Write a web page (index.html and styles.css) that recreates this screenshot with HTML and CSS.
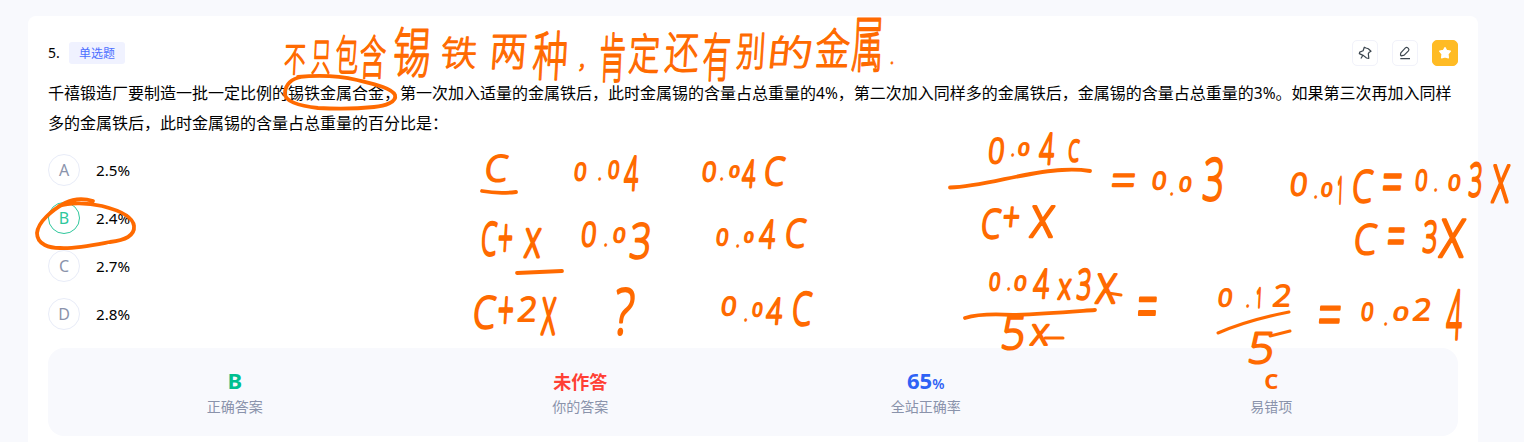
FILE: index.html
```html
<!DOCTYPE html>
<html lang="zh-CN">
<head>
<meta charset="utf-8">
<title>单选题</title>
<link rel="stylesheet" href="styles.css">
</head>
<body>
<main class="card">
  <header class="head">
    <span class="num">5.</span>
    <span class="tag">单选题</span>
    <div class="tools">
      <button class="tool" aria-label="pin"><svg width="14" height="14" viewBox="0 0 14 14"><path d="M6.300 1.200 8 2 10.300 2.800 13 5.300 11.300 6.200 10.300 7.600 10.800 12.300 8.500 12 5.600 9.600 1.300 7.600 1.700 6.100 5.100 4.800ZM4.600 9.700 2.900 12.500"/></svg></button>
      <button class="tool" aria-label="edit"><svg width="14" height="14" viewBox="0 0 14 14"><path d="M2.800 6.800 7.400 1.900Q8.600.9 9.800 1.900L10.500 2.600Q11.400 3.600 10.400 4.800L6.200 9.200 3.200 9.900 2.500 9.100ZM2.300 12.700H12"/></svg></button>
      <button class="tool tool-on" aria-label="star"><svg width="14" height="14" viewBox="0 0 14 14"><path d="M7 1.600 8.600 4.400 12.400 5.200 10 8 10.400 11.900 7 10.900 3.600 11.900 4 8 1.600 5.200 5.400 4.400Z"/></svg></button>
    </div>
  </header>
  <p class="stem"><span class="line">千禧锻造厂要制造一批一定比例的锡铁金属合金，第一次加入适量的金属铁后，此时金属锡的含量占总重量的<span class="n">4%</span>，第二次加入同样多的金属铁后，金属锡的含量占总重量的<span class="n">3%</span>。如果第三次再加入同样</span><span class="line">多的金属铁后，此时金属锡的含量占总重量的百分比是：</span></p>
  <ul class="options">
    <li class="option"><span class="key">A</span><span>2.5%</span></li>
    <li class="option"><span class="key key-right">B</span><span>2.4%</span></li>
    <li class="option"><span class="key">C</span><span>2.7%</span></li>
    <li class="option"><span class="key">D</span><span>2.8%</span></li>
  </ul>
  <section class="stats">
    <div class="stat"><b class="value green">B</b><span class="label">正确答案</span></div>
    <div class="stat"><b class="value red">未作答</b><span class="label">你的答案</span></div>
    <div class="stat"><b class="value blue">65<small>%</small></b><span class="label">全站正确率</span></div>
    <div class="stat"><b class="value orange">C</b><span class="label">易错项</span></div>
  </section>
</main>

<svg class="ink" width="1524" height="442" viewBox="0 0 1524 442">
  <g class="note">
    <text data-box="284 45 306 76">不</text><text data-box="311 40 331 75">只</text><text data-box="335 34 359 74">包</text><text data-box="359 34 387 80">含</text><text data-box="392 26 431 79">锡</text><text data-box="440 36 478 70">铁</text><text data-box="490 34 527 71">两</text><text data-box="532 30 568 82">种</text><text data-box="579 64 584 72">，</text><text data-box="599 32 626 84">肯</text><text data-box="628 33 661 75">定</text><text data-box="664 32 700 74">还</text><text data-box="702 32 731 83">有</text><text data-box="736 32 765 70">别</text><text data-box="769 35 812 69">的</text><text data-box="815 27 851 67">金</text><text data-box="851 17 882 73">属</text><text data-box="890 61 894 65">.</text>
  </g>
  <g class="math">
    <text data-box="485 155 509 182">C</text><text data-box="574 163 587 181">0</text><text data-box="598 177 602 181">.</text><text data-box="608 161 620 179">0</text><text data-box="623 156 640 191">4</text>
    <text data-box="702 162 717 182">0</text><text data-box="720 177 724 181">.</text><text data-box="729 166 740 178">0</text><text data-box="741 160 757 188">4</text><text data-box="764 157 786 186">C</text>
  </g>
  <g class="math">
    <text data-box="481 222 498 256">C</text><text data-box="498 224 513 252">+</text><text data-box="523 228 542 258">x</text><text data-box="581 222 597 247">0</text><text data-box="604 243 608 247">.</text><text data-box="613 228 626 243">0</text><text data-box="629 223 652 259">3</text>
    <text data-box="716 229 729 246">0</text><text data-box="736 244 740 248">.</text><text data-box="744 232 754 243">0</text><text data-box="758 220 777 249">4</text><text data-box="785 219 807 248">C</text>
  </g>
  <g class="math">
    <text data-box="473 296 497 329">C</text><text data-box="498 296 514 324">+</text><text data-box="518 297 538 322">2</text><text data-box="540 297 557 335">x</text><text data-box="613 288 636 335">?</text>
    <text data-box="721 297 737 316">0</text><text data-box="744 318 748 322">.</text><text data-box="752 303 763 317">0</text><text data-box="765 298 784 325">4</text><text data-box="792 292 813 326">C</text>
  </g>
  <g class="math">
    <text data-box="988 138 1005 164">0</text><text data-box="1011 153 1015 157">.</text><text data-box="1018 143 1030 156">0</text><text data-box="1038 133 1056 165">4</text><text data-box="1068 140 1080 162">C</text>
    <text data-box="981 209 1002 239">C</text><text data-box="1003 207 1020 228">+</text><text data-box="1028 205 1056 238">x</text>
    <text data-box="1112 174 1135 187">=</text><text data-box="1152 172 1167 190">0</text><text data-box="1170 192 1174 196">.</text><text data-box="1179 177 1192 192">0</text><text data-box="1202 158 1225 201">3</text>
  </g>
  <g class="math">
    <text data-box="989 273 1001 291">0</text><text data-box="1007 287 1011 291">.</text><text data-box="1014 276 1027 291">0</text><text data-box="1032 269 1051 299">4</text><text data-box="1057 279 1072 300">x</text><text data-box="1076 269 1092 300">3</text><text data-box="1094 273 1118 304">x</text>
    <text data-box="1001 316 1026 350">5</text><text data-box="1029 324 1050 346">x</text><text data-box="1138 297 1157 315">=</text>
    <text data-box="1218 289 1233 307">0</text><text data-box="1246 304 1250 308">.</text><text data-box="1256 288 1261 308">1</text><text data-box="1273 285 1292 307">2</text><text data-box="1248 332 1275 364">5</text>
    <text data-box="1319 306 1341 323">=</text><text data-box="1361 303 1374 321">0</text><text data-box="1384 322 1388 326">.</text><text data-box="1393 307 1409 321">0</text><text data-box="1413 299 1432 321">2</text><text data-box="1445 290 1464 340">4</text>
  </g>
  <g class="math">
    <text data-box="1290 173 1308 196">0</text><text data-box="1314 195 1318 199">.</text><text data-box="1321 183 1333 197">0</text><text data-box="1337 177 1342 204">1</text><text data-box="1352 170 1374 203">C</text><text data-box="1383 174 1402 190">=</text><text data-box="1415 170 1428 191">0</text><text data-box="1434 188 1438 192">.</text><text data-box="1448 175 1461 191">0</text><text data-box="1468 163 1483 197">3</text><text data-box="1490 164 1511 203">x</text>
    <text data-box="1354 224 1378 255">C</text><text data-box="1388 228 1405 244">=</text><text data-box="1422 221 1438 253">3</text><text data-box="1437 218 1467 258">x</text>
  </g>
  <g class="marks">
    <path d="M298 77C318 75 340 76 357 80C373 84 392 88 395 95C397 102 385 106 374 107C355 109 336 109 318 108C299 106 283 101 285 92C286 84 291 79 301 77"/>
    <path d="M93 201C83 198 73 199 65 203C52 210 38 222 37 233C37 245 50 248 60 248C75 249 94 245 110 242C125 240 135 236 134 226C133 216 118 210 102 206C88 203 70 202 59 206"/>
    <path d="M482 191Q498 194 516 192"/><path d="M517 273Q540 272 562 271"/>
    <path d="M950 187.500C983 187 1023 172 1062 170Q1077 169 1090 171"/>
    <path d="M965 318Q981 313 1013 315C1042 314 1067 312 1095 310"/>
    <path class="thin" d="M1218 333Q1248 320 1289 312"/><path class="thin" d="M1045 338H1063"/><path class="thin" d="M1108 293 1121 295"/><path class="thin" d="M1270 336 1290 331"/>
  </g>
</svg>
<script src="ink.js"></script>
</body>
</html>
```
FILE: ink.js
```js
// Slant each handwritten character and stretch it to fill its box: "left top right bottom".
const PEN = 2.2;
const ctx = document.createElement('canvas').getContext('2d');
document.querySelectorAll('.ink text').forEach((el) => {
  const [l, t, r, b] = el.dataset.box.split(' ').map(Number);
  const style = getComputedStyle(el);
  const angle = el.closest('.note') ? 5 : 7;
  const k = Math.tan(angle * Math.PI / 180);
  ctx.font = `${style.fontWeight} ${style.fontSize} ${style.fontFamily}`;
  const m = ctx.measureText(el.textContent);
  const h = m.actualBoundingBoxAscent + m.actualBoundingBoxDescent;
  const w = m.actualBoundingBoxRight + m.actualBoundingBoxLeft;
  const pen = el.closest('.note') ? 1.2 : PEN;
  const sx = (r - l - pen / 2) / (w + k * h);
  const sy = (b - t - pen / 2) / h;
  const x = l + pen / 4 + (m.actualBoundingBoxLeft + k * m.actualBoundingBoxDescent) * sx;
  const y = t + pen / 4 + m.actualBoundingBoxAscent * sy;
  el.style.strokeWidth = `${pen / Math.sqrt(sx * sy) / (el.textContent === '.' ? 3 : 1)}px`;
  el.setAttribute('transform', `translate(${x} ${y}) scale(${sx} ${sy}) skewX(${-angle})`);
});
```
FILE: styles.css
```css
* { box-sizing: border-box; }
body {
  margin: 0;
  height: 442px;
  padding: 16px 46px 0 28px;
  overflow: hidden;
  position: relative;
  background: #f8f9fd;
  color: #000;
  font: 16px/30px "Noto Sans", "Noto Sans CJK SC", sans-serif;
}
.card {
  height: 426px;
  padding: 24px 20px 0;
  border-radius: 8px 8px 0 0;
  background: #fff;
}
.head { display: flex; align-items: center; height: 26px; }
.num { width: 21px; font-size: 14px; }
.tag {
  width: 56px;
  height: 22px;
  border-radius: 3px;
  background: #f0f2ff;
  color: #4c6fff;
  font-size: 12px;
  line-height: 23px;
  text-align: center;
}
.tools { display: flex; gap: 14px; margin-left: auto; }
.tool {
  display: flex;
  align-items: center;
  justify-content: center;
  width: 26px;
  height: 26px;
  padding: 0;
  border: 1px solid #f1f2fa;
  border-radius: 5px;
  background: #fff;
}
.tool path { fill: none; stroke: #3c464f; stroke-width: 1.2; stroke-linejoin: round; }
.tool-on { border-color: #ffbb24; background: #ffbb24; }
.tool-on path { fill: #fff; stroke: #fff; }
.stem { margin: 12px 0 0; }
.line { display: block; white-space: nowrap; }
.n { font-size: 15.5px; }
.options {
  display: flex;
  flex-direction: column;
  gap: 16px;
  margin: 16px 0 0;
  padding: 0;
  list-style: none;
  font-size: 15.2px;
}
.option { display: flex; align-items: center; gap: 16px; height: 32px; }
.key {
  width: 32px;
  height: 32px;
  border: 1px solid #e8ecf8;
  border-radius: 50%;
  color: #8a93ab;
  font-size: 16px;
  line-height: 31px;
  text-align: center;
}
.key-right { border-color: #2fc79c; color: #2fc79c; }
.stats {
  display: flex;
  height: 88px;
  margin-top: 18px;
  padding: 20px 14px 0;
  border-radius: 16px;
  background: #f8f9fd;
}
.stat { display: flex; flex: 1; flex-direction: column; align-items: center; }
.value { height: 26px; font-size: 22px; line-height: 24px; }
.value small { font-size: 14px; font-weight: 600; }
.label { color: #8a93ab; font-size: 14px; line-height: 26px; }
.green { color: #00bf8f; }
.red { color: #ff4034; font-size: 18px; line-height: 28px; }
.blue { color: #2f62f5; }
.orange { color: #ff6500; }
.ink { position: absolute; inset: 0; pointer-events: none; }
.ink text {
  fill: #ff6a00;
  stroke: #ff6a00;
  stroke-linejoin: round;
  font-size: 40px;
  font-weight: 300;
}
.note text { font-family: "Noto Sans CJK SC", sans-serif; }
.math text { font-family: "Open Sans", sans-serif; }
.marks path { fill: none; stroke: #ff6a00; stroke-width: 3.8; stroke-linecap: round; }
.marks .thin { stroke-width: 3; }
```
